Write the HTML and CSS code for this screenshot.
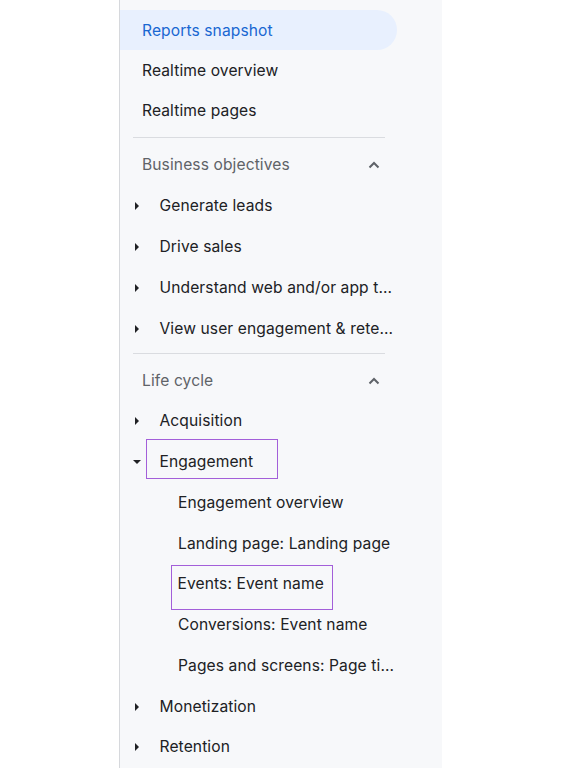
FILE: index.html
```html
<!DOCTYPE html>
<html lang="en">
<head>
<meta charset="utf-8">
<title>Reports navigation</title>
<link rel="stylesheet" href="styles.css">
</head>
<body>
<div class="page">
  <nav class="sidebar">
    <div class="row top active"><span class="label">Reports snapshot</span></div>
    <div class="row top"><span class="label">Realtime overview</span></div>
    <div class="row top"><span class="label">Realtime pages</span></div>
    <div class="divider first"></div>

    <div class="row header">
      <span class="label">Business objectives</span>
      <svg class="chev" width="12" height="8" viewBox="0 0 12 8"><path d="M1.5 6.5 L6 2 L10.5 6.5" fill="none" stroke="#5f6368" stroke-width="2"/></svg>
    </div>
    <div class="row item"><span class="tri right"></span><span class="label">Generate leads</span></div>
    <div class="row item"><span class="tri right"></span><span class="label">Drive sales</span></div>
    <div class="row item"><span class="tri right"></span><span class="label">Understand web and/or app t...</span></div>
    <div class="row item"><span class="tri right"></span><span class="label">View user engagement &amp; rete...</span></div>
    <div class="divider second"></div>

    <div class="row header">
      <span class="label">Life cycle</span>
      <svg class="chev" width="12" height="8" viewBox="0 0 12 8"><path d="M1.5 6.5 L6 2 L10.5 6.5" fill="none" stroke="#5f6368" stroke-width="2"/></svg>
    </div>
    <div class="row item lc"><span class="tri right"></span><span class="label">Acquisition</span></div>
    <div class="row item lc"><span class="tri down"></span><span class="label mark mark-eng">Engagement</span></div>
    <div class="row sub lc"><span class="label">Engagement overview</span></div>
    <div class="row sub lc"><span class="label">Landing page: Landing page</span></div>
    <div class="row sub lc"><span class="label mark mark-ev">Events: Event name</span></div>
    <div class="row sub lc"><span class="label">Conversions: Event name</span></div>
    <div class="row sub lc"><span class="label">Pages and screens: Page ti...</span></div>
    <div class="row item lc"><span class="tri right"></span><span class="label">Monetization</span></div>
    <div class="row item lc"><span class="tri right"></span><span class="label">Retention</span></div>
  </nav>
</div>
</body>
</html>
```
FILE: styles.css
```css
html, body {
  margin: 0;
  padding: 0;
  background: #ffffff;
}
body {
  font-family: Inter, Roboto, "Liberation Sans", Arial, sans-serif;
  color: #202124;
  width: 576px;
  height: 768px;
  overflow: hidden;
}
.page {
  display: flex;
  padding-left: 119px;
  height: 768px;
}
.sidebar {
  width: 322px;
  background: #f7f8fa;
  border-left: 1px solid #d6d8dc;
  padding-top: 10px;
  display: flex;
  flex-direction: column;
}
.row {
  box-sizing: border-box;
  display: flex;
  align-items: center;
  font-size: 15.6px;
  letter-spacing: 0.1px;
  line-height: 20px;
  white-space: nowrap;
  padding-top: 2px;
  flex: none;
}
.row.top {
  height: 40px;
  padding-left: 22px;
  margin-right: 45px;
}
.row.top.active {
  background: #e8f0fe;
  color: #1967d2;
  border-radius: 0 20px 20px 0;
}
.divider {
  height: 1px;
  background: #dadce0;
  margin-left: 13px;
  margin-right: 57px;
  flex: none;
}
.divider.first { margin-top: 7px; margin-bottom: 6px; }
.divider.second { margin-top: 5px; margin-bottom: 6px; }
.row.header {
  height: 40px;
  padding-left: 22px;
  padding-right: 62px;
  justify-content: space-between;
  color: #5f6368;
}
.chev { display: block; }
.row.item {
  height: 41px;
  padding-left: 15px;
}
.row.lc { height: 40.75px; }
.row.sub {
  padding-left: 58px;
}
.tri {
  width: 0;
  height: 0;
  display: block;
  flex: none;
}
.tri.right {
  border-top: 4px solid transparent;
  border-bottom: 4px solid transparent;
  border-left: 4.5px solid #202124;
  margin-right: 20.5px;
}
.tri.down {
  border-left: 4px solid transparent;
  border-right: 4px solid transparent;
  border-top: 4.5px solid #202124;
  margin-left: -2px;
  margin-right: 19px;
}
.mark {
  border: 1.5px solid #a35fd9;
}
.mark-eng {
  padding: 12px 24px 6px 13px;
  margin: -13.5px -25.5px -7.5px -14.5px;
}
.mark-ev {
  padding: 8px 8px 15px 5.5px;
  margin: -9.5px -9.5px -16.5px -7px;
}
```
